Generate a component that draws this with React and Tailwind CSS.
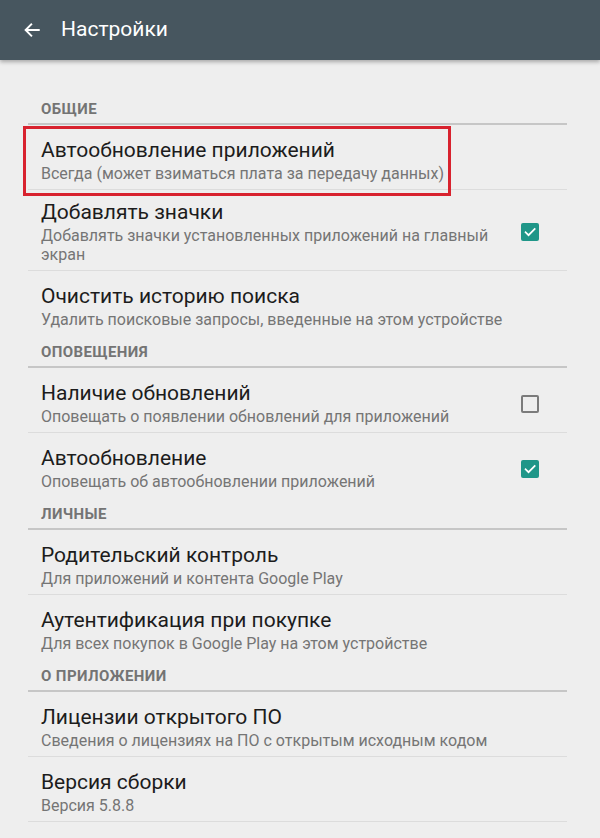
import React from 'react';

const sections = [
  {
    title: 'ОБЩИЕ',
    items: [
      { title: 'Автообновление приложений', sub: 'Всегда (может взиматься плата за передачу данных)', marked: true },
      { title: 'Добавлять значки', sub: 'Добавлять значки установленных приложений на главный экран', check: true, tall: true },
      { title: 'Очистить историю поиска', sub: 'Удалить поисковые запросы, введенные на этом устройстве' },
    ],
  },
  {
    title: 'ОПОВЕЩЕНИЯ',
    items: [
      { title: 'Наличие обновлений', sub: 'Оповещать о появлении обновлений для приложений', check: false },
      { title: 'Автообновление', sub: 'Оповещать об автообновлении приложений', check: true },
    ],
  },
  {
    title: 'ЛИЧНЫЕ',
    items: [
      { title: 'Родительский контроль', sub: 'Для приложений и контента Google Play' },
      { title: 'Аутентификация при покупке', sub: 'Для всех покупок в Google Play на этом устройстве' },
    ],
  },
  {
    title: 'О ПРИЛОЖЕНИИ',
    items: [
      { title: 'Лицензии открытого ПО', sub: 'Сведения о лицензиях на ПО с открытым исходным кодом' },
      { title: 'Версия сборки', sub: 'Версия 5.8.8' },
    ],
  },
];

const CheckBox = ({ checked }) =>
  checked ? (
    <div className="w-[18px] h-[18px] rounded-[2px] bg-[#1f9688] flex items-center justify-center">
      <svg width="14" height="14" viewBox="0 0 24 24" fill="none" stroke="#fff" strokeWidth="3" strokeLinecap="square">
        <path d="M4.5 12.5l5 5L20 7" />
      </svg>
    </div>
  ) : (
    <div className="w-[18px] h-[18px] rounded-[2px] border-2 border-[#7b7b7b]" />
  );

const Item = ({ item, divider }) => (
  <div className={`relative flex items-center pl-[13px] ${divider ? 'border-b border-[#dcdcdc]' : ''} ${item.tall ? 'pt-[10px] pb-[6px]' : 'pt-[13px] pb-[6px]'}`}>
    <div className="flex-1 pr-[4px]">
      <div className="text-[21px] leading-[24px] text-[#1c1c1c]">{item.title}</div>
      <div className="mt-[2px] text-[16px] leading-[19px] text-[#757575]">{item.sub}</div>
    </div>
    {item.check !== undefined && (
      <div className="w-[46px] shrink-0">
        <CheckBox checked={item.check} />
      </div>
    )}
    {item.marked && (
      <div className="absolute left-[-5px] top-[1px] w-[428px] h-[70px] border-[3px] border-[#d8222e]" />
    )}
  </div>
);

export default function App() {
  return (
    <div className="w-[600px] h-[838px] bg-[#eeeeee] overflow-hidden" style={{ fontFamily: 'Roboto, "Noto Sans", sans-serif' }}>
      <div className="relative z-10 h-[60px] bg-[#47565f] flex items-center shadow-[0_2px_4px_rgba(0,0,0,0.3)]">
        <svg className="ml-[23px]" width="18" height="18" viewBox="0 0 24 24" fill="none" stroke="#fff" strokeWidth="2.6" strokeLinecap="square">
          <path d="M21 12H4M11 4.5L3.5 12l7.5 7.5" />
        </svg>
        <div className="ml-[20px] text-[21px] text-white">Настройки</div>
      </div>
      <div className="ml-[28px] w-[539px] pt-[32px]">
        {sections.map((s) => (
          <div key={s.title}>
            <div className="pl-[13px] pt-[10px] pb-[6px] text-[15px] leading-[15px] tracking-[0.4px] font-bold text-[#747474] border-b-2 border-[#c6c6c6]">
              {s.title}
            </div>
            {s.items.map((it, i) => (
              <Item key={it.title} item={it} divider={i < s.items.length - 1 || s.title === 'О ПРИЛОЖЕНИИ'} />
            ))}
          </div>
        ))}
      </div>
    </div>
  );
}
